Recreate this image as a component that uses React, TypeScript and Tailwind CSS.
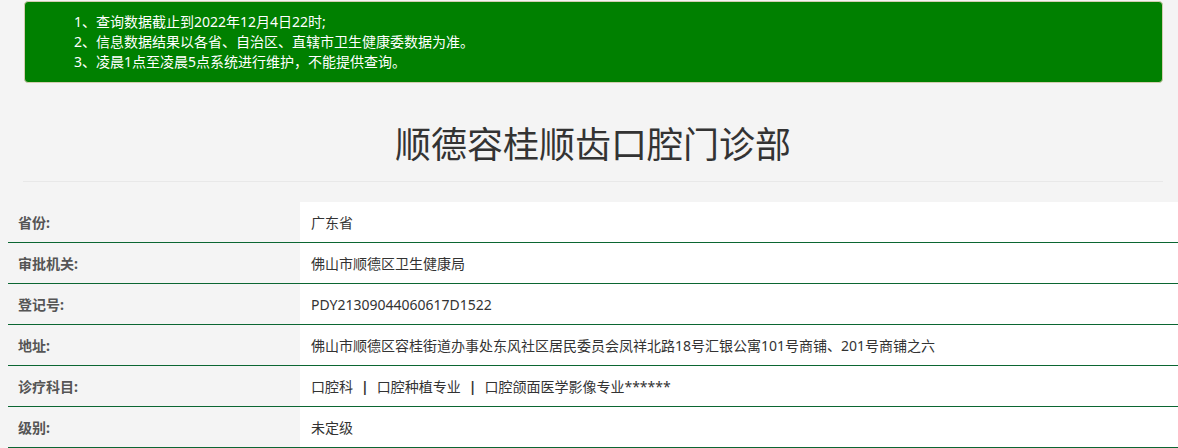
import { Fragment } from "react";

const notices = [
  "1、查询数据截止到2022年12月4日22时;",
  "2、信息数据结果以各省、自治区、直辖市卫生健康委数据为准。",
  "3、凌晨1点至凌晨5点系统进行维护，不能提供查询。",
];

const rows: { label: string; value: string | string[] }[] = [
  { label: "省份:", value: "广东省" },
  { label: "审批机关:", value: "佛山市顺德区卫生健康局" },
  { label: "登记号:", value: "PDY21309044060617D1522" },
  {
    label: "地址:",
    value: "佛山市顺德区容桂街道办事处东风社区居民委员会凤祥北路18号汇银公寓101号商铺、201号商铺之六",
  },
  { label: "诊疗科目:", value: ["口腔科", "口腔种植专业", "口腔颌面医学影像专业******"] },
  { label: "级别:", value: "未定级" },
];

const App = () => {
  return (
    <div
      className="min-h-[448px] w-[1178px] overflow-hidden bg-[#f4f4f4] pt-[1px]"
      style={{ fontFamily: '"Noto Sans", "Noto Sans CJK SC", sans-serif' }}
    >
      {/* notice box */}
      <div className="ml-[24px] w-[1139px] rounded-[4px] border border-[#d3cdb0] bg-[#008000] py-[10px] pl-[49px] text-[14px] leading-[20px] text-white">
        {notices.map((n) => (
          <p key={n}>{n}</p>
        ))}
      </div>

      <div className="ml-[23px] w-[1140px]">
        <h1 className="mt-[42px] text-center text-[36px] leading-[40px] text-[#333]">
          顺德容桂顺齿口腔门诊部
        </h1>
        <div className="mt-[16px] h-px bg-[#e8e8e8]" />
      </div>

      <div className="ml-[8px] mt-[20px] w-[1170px]">
        {rows.map((row) => (
          <div key={row.label} className="flex h-[41px] border-b border-[#0b6632]">
            <div className="flex w-[292px] items-center pl-[10px] text-[14px] font-bold text-[#555]">
              {row.label}
            </div>
            <div className="flex flex-1 items-center bg-white pl-[11px] text-[14px] text-[#333]">
              {Array.isArray(row.value)
                ? row.value.map((v, i) => (
                    <Fragment key={v}>
                      {i > 0 && <span className="mx-[8px] font-bold">|</span>}
                      <span>{v}</span>
                    </Fragment>
                  ))
                : row.value}
            </div>
          </div>
        ))}
      </div>
    </div>
  );
};

export default App;
